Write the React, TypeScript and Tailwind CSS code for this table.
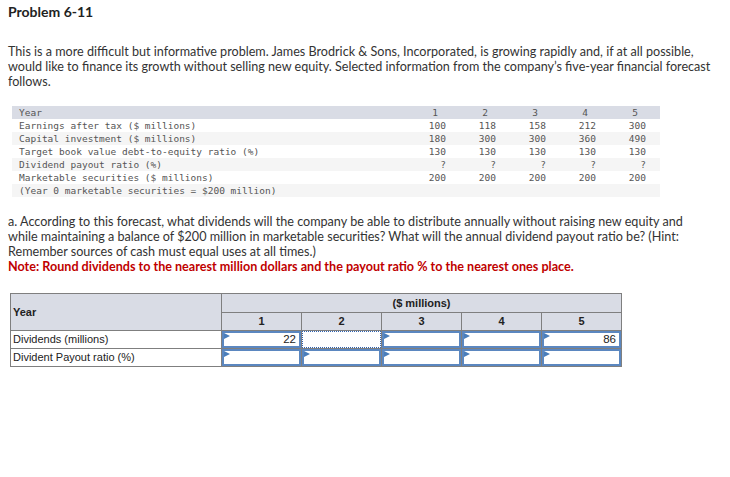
import React from "react";

const forecast = [
  { label: "Earnings after tax ($ millions)", values: ["100", "118", "158", "212", "300"] },
  { label: "Capital investment ($ millions)", values: ["180", "300", "300", "360", "490"] },
  { label: "Target book value debt-to-equity ratio (%)", values: ["130", "130", "130", "130", "130"] },
  { label: "Dividend payout ratio (%)", values: ["?", "?", "?", "?", "?"] },
  { label: "Marketable securities ($ millions)", values: ["200", "200", "200", "200", "200"] },
  { label: "(Year 0 marketable securities = $200 million)", values: ["", "", "", "", ""] },
];

const years = ["1", "2", "3", "4", "5"];

function Marker() {
  return (
    <span className="absolute left-0 top-0 w-0 h-0 border-t-[3px] border-b-[3px] border-l-[6px] border-t-transparent border-b-transparent border-l-[#4a7ebb]" />
  );
}

function InputCell({ value, focused }: { value?: string; focused?: boolean }) {
  return (
    <td className="p-0 border border-[#7f7f7f] h-[18px]">
      <div
        className={`relative h-[17px] flex items-center justify-end pr-[3px] bg-white text-[11.5px] text-[#222] ${
          focused ? "border border-dotted border-[#2f62b0]" : "border-2 border-[#5b87c0]"
        }`}
      >
        {!focused && <Marker />}
        {value}
      </div>
    </td>
  );
}

export default function App() {
  return (
    <div className="w-[730px] h-[477px] bg-white text-[#333] px-2" style={{ fontFamily: "Lato, 'Open Sans', sans-serif" }}>
      <h1 className="pt-[3px] text-[14px] font-bold text-[#222] leading-[18px]">Problem 6-11</h1>

      <p className="mt-[23px] text-[12.6px] leading-[15px] w-[712px]">
        This is a more difficult but informative problem. James Brodrick &amp; Sons, Incorporated, is growing rapidly and, if at all possible, would like to finance its growth without selling new equity. Selected information from the company’s five-year financial forecast follows.
      </p>

      <div
        className="mt-[17px] ml-[4px] w-[648px] text-[9.5px] leading-[13px] text-[#555]"
        style={{ fontFamily: "'DejaVu Sans Mono', 'Liberation Mono', monospace" }}
      >
        <div className="grid grid-cols-[1fr_50px_50px_50px_50px_50px] bg-[#d9dce5]">
          <div className="pl-[7px]">Year</div>
          {years.map((y) => (
            <div key={y} className="text-center">{y}</div>
          ))}
        </div>
        {forecast.map((row, i) => (
          <div
            key={row.label}
            className={`grid grid-cols-[1fr_50px_50px_50px_50px_50px] ${i % 2 === 1 ? "bg-[#f5f5f5]" : "bg-white"}`}
          >
            <div className="pl-[7px] whitespace-pre">{row.label}</div>
            {row.values.map((v, j) => (
              <div key={j} className="text-right pr-[14px]">{v}</div>
            ))}
          </div>
        ))}
      </div>

      <div className="mt-[17px] text-[12.6px] leading-[15px] w-[700px]">
        <p>
          a. According to this forecast, what dividends will the company be able to distribute annually without raising new equity and while maintaining a balance of $200 million in marketable securities? What will the annual dividend payout ratio be? (Hint: Remember sources of cash must equal uses at all times.)
        </p>
        <p className="font-bold text-[#c00000]">
          Note: Round dividends to the nearest million dollars and the payout ratio % to the nearest ones place.
        </p>
      </div>

      <table
        className="mt-[19px] ml-[2px] border-collapse border border-[#7f7f7f] text-[11px] text-[#222]"
        style={{ fontFamily: "'Liberation Sans', Arial, sans-serif" }}
      >
        <thead>
          <tr className="bg-[#d9dce5]">
            <th rowSpan={2} className="w-[211px] border border-[#7f7f7f] text-left font-bold pl-[2px] align-middle">
              Year
            </th>
            <th colSpan={5} className="h-[19px] border border-[#7f7f7f] font-bold text-center">
              ($ millions)
            </th>
          </tr>
          <tr className="bg-[#d9dce5]">
            {years.map((y) => (
              <th key={y} className="w-[80px] h-[18px] border border-[#7f7f7f] font-bold text-center">
                {y}
              </th>
            ))}
          </tr>
        </thead>
        <tbody>
          <tr>
            <td className="border border-[#7f7f7f] pl-[2px] h-[18px]">Dividends (millions)</td>
            <InputCell value="22" />
            <InputCell focused />
            <InputCell />
            <InputCell />
            <InputCell value="86" />
          </tr>
          <tr>
            <td className="border border-[#7f7f7f] pl-[2px] h-[18px]">Divident Payout ratio (%)</td>
            <InputCell />
            <InputCell />
            <InputCell />
            <InputCell />
            <InputCell />
          </tr>
        </tbody>
      </table>
    </div>
  );
}
